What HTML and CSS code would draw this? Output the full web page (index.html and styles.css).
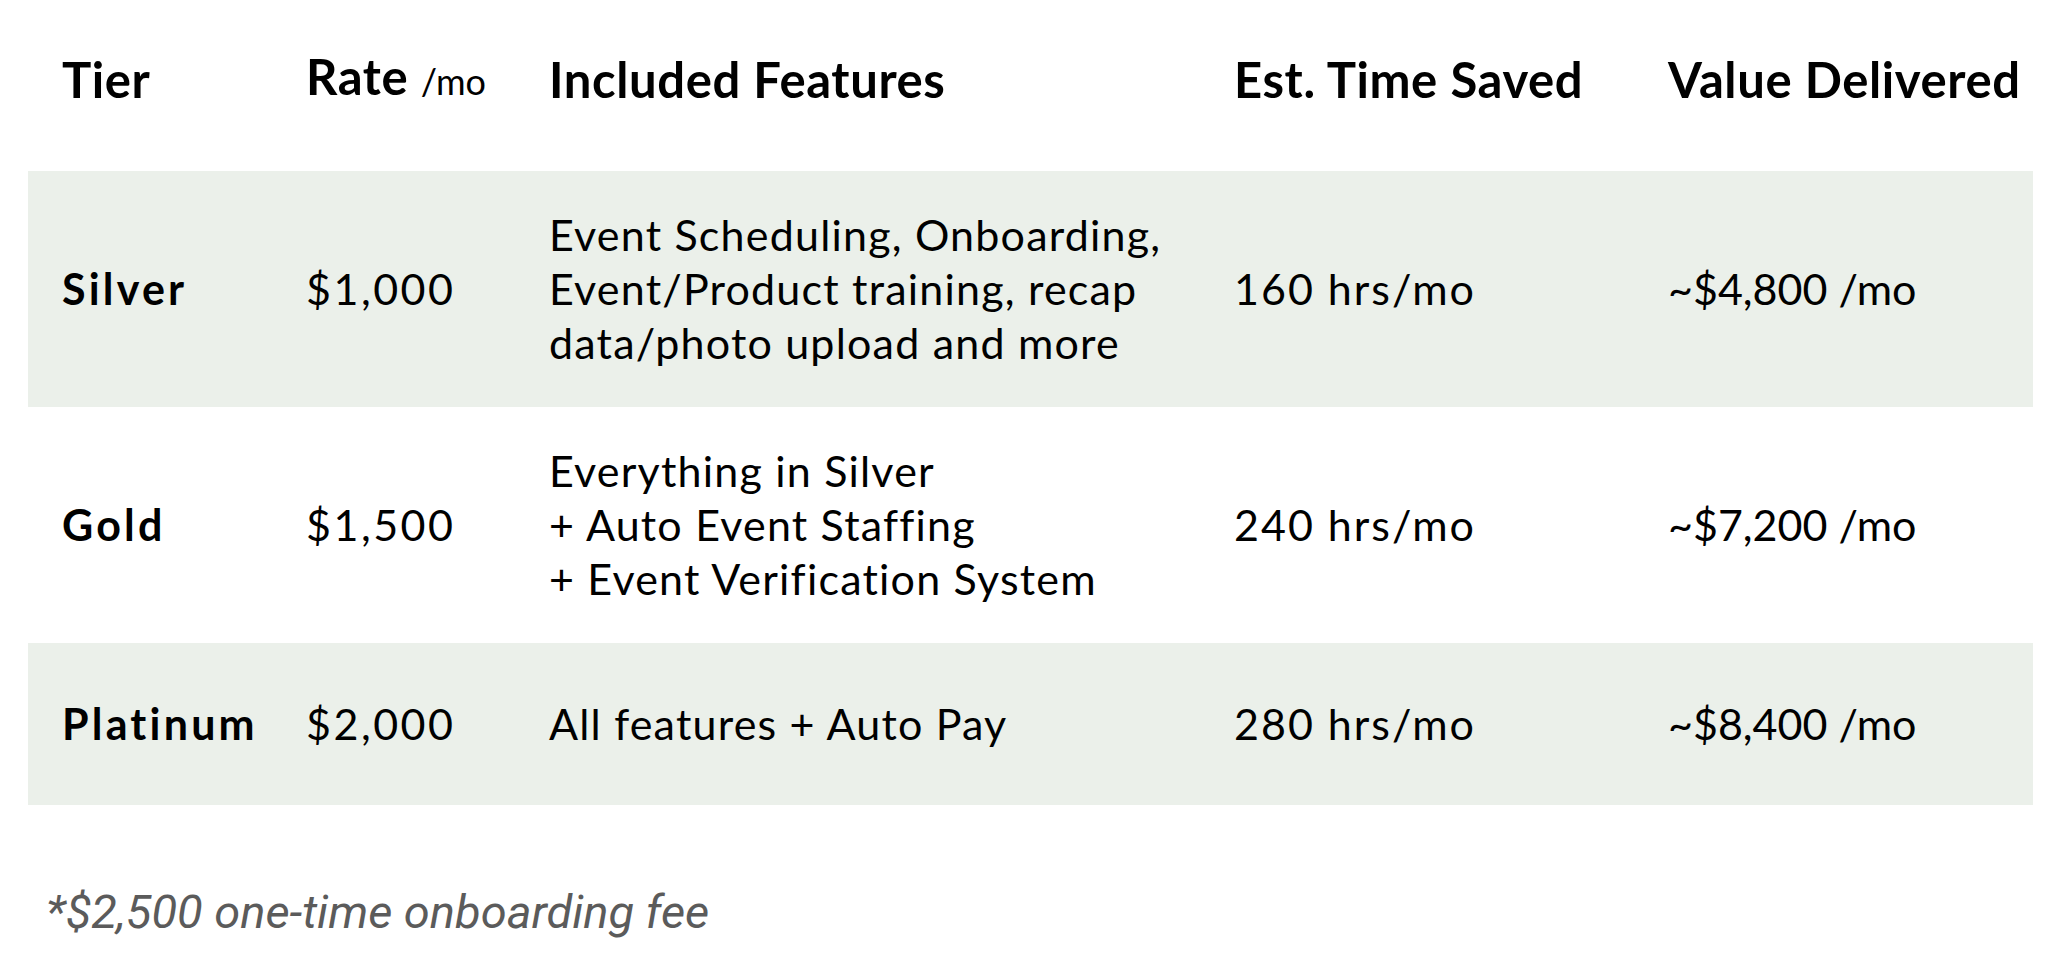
FILE: index.html
```html
<!DOCTYPE html>
<html lang="en">
<head>
<meta charset="utf-8">
<title>Pricing Tiers</title>
<link rel="stylesheet" href="styles.css">
</head>
<body>
<main class="page">
  <div class="table">
    <div class="row head">
      <div class="cell">Tier</div>
      <div class="cell">Rate <span class="unit">/mo</span></div>
      <div class="cell">Included Features</div>
      <div class="cell">Est. Time Saved</div>
      <div class="cell">Value Delivered</div>
    </div>
    <div class="row shaded">
      <div class="cell tier">Silver</div>
      <div class="cell rate">$1,000</div>
      <div class="cell features">Event Scheduling, Onboarding,<br>Event/Product training, recap<br>data/photo upload and more</div>
      <div class="cell time">160 hrs/mo</div>
      <div class="cell value">~$4,800 /mo</div>
    </div>
    <div class="row">
      <div class="cell tier">Gold</div>
      <div class="cell rate">$1,500</div>
      <div class="cell features">Everything in Silver<br>+ Auto Event Staffing<br>+ Event Verification System</div>
      <div class="cell time">240 hrs/mo</div>
      <div class="cell value">~$7,200 /mo</div>
    </div>
    <div class="row shaded">
      <div class="cell tier">Platinum</div>
      <div class="cell rate">$2,000</div>
      <div class="cell features">All features + Auto Pay</div>
      <div class="cell time">280 hrs/mo</div>
      <div class="cell value">~$8,400 /mo</div>
    </div>
  </div>
  <p class="note">*$2,500 one-time onboarding fee</p>
</main>
</body>
</html>
```

FILE: styles.css
```css
html, body {
  margin: 0;
  padding: 0;
  background: #ffffff;
}

.page {
  padding: 0 26px 0 28px;
  font-family: "Lato", "Open Sans", sans-serif;
  color: #000000;
}

.table {
  display: flex;
  flex-direction: column;
}

.row {
  display: grid;
  grid-template-columns: 244px 243px 685px 434px 1fr;
  align-items: center;
  min-height: 162px;
  padding: 37px 0;
  box-sizing: border-box;
  font-size: 43px;
  line-height: 54px;
}

.row.head {
  height: 171px;
  padding: 0 0 14px 0;
  font-size: 49px;
  font-weight: 700;
  letter-spacing: 0.6px;
}

.row.shaded {
  background: #ebf0ea;
}

.cell {
  padding-left: 34px;
  white-space: nowrap;
}

.unit {
  font-weight: 400;
  font-size: 36px;
  letter-spacing: 0;
}

.tier {
  font-weight: 700;
  letter-spacing: 3.2px;
}

.rate {
  letter-spacing: 2.5px;
}

.features {
  letter-spacing: 1.2px;
}

.time {
  letter-spacing: 2px;
}

.value {
  letter-spacing: 0;
}

.note {
  margin: 80px 0 0 18px;
  font-family: "Roboto", "Liberation Sans", sans-serif;
  font-style: italic;
  font-size: 47px;
  line-height: 54px;
  color: #5b5b5b;
}
```
